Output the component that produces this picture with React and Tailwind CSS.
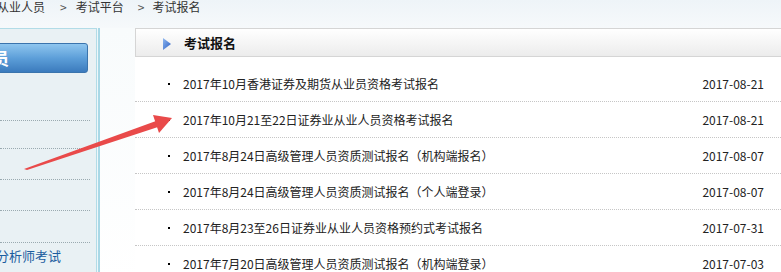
const rows = [
    { title: '2017年10月香港证券及期货从业员资格考试报名', date: '2017-08-21' },
    { title: '2017年10月21至22日证券业从业人员资格考试报名', date: '2017-08-21' },
    { title: '2017年8月24日高级管理人员资质测试报名（机构端报名）', date: '2017-08-07' },
    { title: '2017年8月24日高级管理人员资质测试报名（个人端登录）', date: '2017-08-07' },
    { title: '2017年8月23至26日证券业从业人员资格预约式考试报名', date: '2017-07-31' },
    { title: '2017年7月20日高级管理人员资质测试报名（机构端登录）', date: '2017-07-03' },
];

const sideItems = ['h-[48px]', 'h-[28px]', 'h-[31px]', 'h-[31px]', 'h-[32px]'];

export default function App() {
    return (
        <div
            className="relative w-[781px] h-[272px] overflow-hidden bg-white text-[12px] text-[#222]"
            style={{ fontFamily: '"Noto Sans CJK SC", "Noto Sans", sans-serif' }}
        >
            {/* breadcrumb */}
            <div className="h-[28px] bg-gradient-to-b from-[#eef4f8] to-[#f6f9fb]">
                <div className="flex items-center -ml-[3px] h-[14px] leading-[14px] text-[#333]">
                    <span>从业人员</span>
                    <span className="ml-[15px] mr-[9px] text-[#555]">&gt;</span>
                    <span>考试平台</span>
                    <span className="ml-[14px] mr-[8px] text-[#555]">&gt;</span>
                    <span>考试报名</span>
                </div>
            </div>

            <div className="flex">
                {/* left sidebar */}
                <div className="w-[100px] h-[244px] flex">
                    <div className="w-[96px] bg-[#e9f1f4] border-t border-[#b2dce7]">
                        <div className="pt-[14px] pr-[8px]">
                            <div className="h-[30px] rounded-[3px] border border-[#3a74ad] bg-gradient-to-b from-[#8ec6ef] via-[#5d9fd9] to-[#3b7bbd] text-white text-[17px] leading-[28px] -ml-[10px] overflow-hidden">
                                <span className="inline-block pl-[1px] font-bold">员</span>
                            </div>
                        </div>
                        {sideItems.map((h, i) => (
                            <div key={i} className={`${h} mr-[6px] border-b border-dotted border-[#9aaab0]`} />
                        ))}
                        <div className="h-[26px] flex items-center -ml-[30px] text-[13px] text-[#1c5e9f] whitespace-nowrap">证券分析师考试</div>
                    </div>
                    <div className="w-[1px] bg-[#b2dce7]" />
                    <div className="w-[1px] bg-[#eef7fa]" />
                    <div className="w-[2px] bg-[#a9d8e6]" />
                </div>

                <div className="w-[35px] bg-gradient-to-b from-[#f8fbfc] to-white" />

                {/* main */}
                <div className="flex-1 -mr-[10px]">
                    <div className="h-[29px] border border-[#d5d5d5] bg-gradient-to-b from-white to-[#ececec] flex items-center pl-[27px]">
                        <svg width="8" height="12" viewBox="0 0 8 12" className="mt-[2px]">
                            <defs>
                                <linearGradient id="tri" x1="0" y1="0" x2="1" y2="1">
                                    <stop offset="0" stopColor="#8fb8f0" />
                                    <stop offset="1" stopColor="#2d5fc4" />
                                </linearGradient>
                            </defs>
                            <polygon points="0,0 8,6 0,12" fill="url(#tri)" />
                        </svg>
                        <span className="ml-[13px] text-[13px] font-bold text-[#111]">考试报名</span>
                    </div>
                    <div className="pt-[9px]">
                        {rows.map((r, i) => (
                            <div key={i} className="h-[36px] flex items-center border-b border-dotted border-[#c6c6c6] pl-[33px] pr-[27px]">
                                <span className="w-[2px] h-[2px] bg-black mr-[13px]" />
                                <span className="flex-1 whitespace-nowrap">{r.title}</span>
                                <span>{r.date}</span>
                            </div>
                        ))}
                    </div>
                </div>
            </div>

            {/* annotation arrow */}
            <svg className="absolute left-0 top-0 pointer-events-none" width="781" height="272">
                <polygon points="24,169 156,121 158,127 27,170" fill="#e94a4a" />
                <polygon points="172,118 153,115 159,133" fill="#e94a4a" />
            </svg>
        </div>
    );
}
